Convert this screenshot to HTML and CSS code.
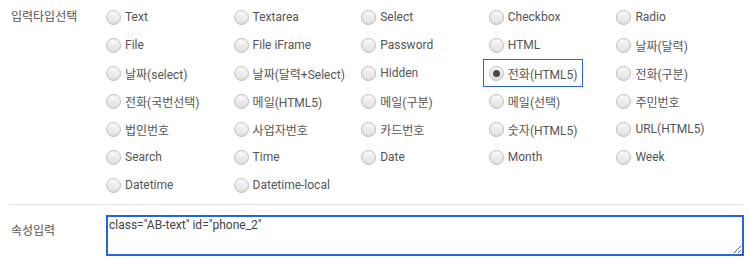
FILE: index.html
```html
<!DOCTYPE html>
<html lang="ko">
<head>
    <meta charset="UTF-8">
    <meta name="viewport" content="width=device-width, initial-scale=1.0">
    <title>입력타입선택</title>
    <link rel="stylesheet" href="styles.css">
</head>
<body>
    <div class="form">
        <div class="form-row">
            <div class="form-label">입력타입선택</div>
            <div class="options">
                <label class="opt"><input type="radio" name="itype"><span>Text</span></label>
                <label class="opt"><input type="radio" name="itype"><span>Textarea</span></label>
                <label class="opt"><input type="radio" name="itype"><span>Select</span></label>
                <label class="opt"><input type="radio" name="itype"><span>Checkbox</span></label>
                <label class="opt"><input type="radio" name="itype"><span>Radio</span></label>

                <label class="opt"><input type="radio" name="itype"><span>File</span></label>
                <label class="opt"><input type="radio" name="itype"><span>File iFrame</span></label>
                <label class="opt"><input type="radio" name="itype"><span>Password</span></label>
                <label class="opt"><input type="radio" name="itype"><span>HTML</span></label>
                <label class="opt"><input type="radio" name="itype"><span>날짜(달력)</span></label>

                <label class="opt"><input type="radio" name="itype"><span>날짜(select)</span></label>
                <label class="opt"><input type="radio" name="itype"><span>날짜(달력+Select)</span></label>
                <label class="opt"><input type="radio" name="itype"><span>Hidden</span></label>
                <label class="opt focused"><input type="radio" name="itype" checked><span>전화(HTML5)</span></label>
                <label class="opt"><input type="radio" name="itype"><span>전화(구분)</span></label>

                <label class="opt"><input type="radio" name="itype"><span>전화(국번선택)</span></label>
                <label class="opt"><input type="radio" name="itype"><span>메일(HTML5)</span></label>
                <label class="opt"><input type="radio" name="itype"><span>메일(구분)</span></label>
                <label class="opt"><input type="radio" name="itype"><span>메일(선택)</span></label>
                <label class="opt"><input type="radio" name="itype"><span>주민번호</span></label>

                <label class="opt"><input type="radio" name="itype"><span>법인번호</span></label>
                <label class="opt"><input type="radio" name="itype"><span>사업자번호</span></label>
                <label class="opt"><input type="radio" name="itype"><span>카드번호</span></label>
                <label class="opt"><input type="radio" name="itype"><span>숫자(HTML5)</span></label>
                <label class="opt"><input type="radio" name="itype"><span>URL(HTML5)</span></label>

                <label class="opt"><input type="radio" name="itype"><span>Search</span></label>
                <label class="opt"><input type="radio" name="itype"><span>Time</span></label>
                <label class="opt"><input type="radio" name="itype"><span>Date</span></label>
                <label class="opt"><input type="radio" name="itype"><span>Month</span></label>
                <label class="opt"><input type="radio" name="itype"><span>Week</span></label>

                <label class="opt"><input type="radio" name="itype"><span>Datetime</span></label>
                <label class="opt"><input type="radio" name="itype"><span>Datetime-local</span></label>
            </div>
        </div>

        <div class="form-row attr-row">
            <div class="form-label">속성입력</div>
            <textarea class="attr-input">class="AB-text" id="phone_2"</textarea>
        </div>
    </div>
</body>
</html>
```

FILE: styles.css
```css
body {
    margin: 0;
    background: #fff;
    font-family: Roboto, "Noto Sans CJK KR", sans-serif;
    font-size: 12px;
    color: #555;
}
.form {
    padding: 3px 6px 0 9px;
}
.form-row {
    display: flex;
}
.form-label {
    width: 95px;
    padding-left: 2px;
    color: #555;
}

/* Radio grid */
.options {
    flex: 1;
    display: grid;
    grid-template-columns: repeat(5, 1fr);
    grid-auto-rows: 28px;
    padding-bottom: 5px;
    border-bottom: 1px solid #e3e3e3;
    margin-left: -97px;
    padding-left: 97px;
}
.form-row:first-child .form-label {
    line-height: 28px;
}
.opt {
    display: flex;
    align-items: center;
    gap: 4px;
    justify-self: start;
    align-self: center;
    height: 16px;
    color: #555;
    cursor: pointer;
}
.opt input {
    appearance: none;
    -webkit-appearance: none;
    width: 15px;
    height: 15px;
    margin: 0;
    border: 1px solid #bcbcbc;
    border-radius: 50%;
    background: linear-gradient(#fafafa, #dedede);
    flex-shrink: 0;
    position: relative;
}
.opt input:checked::after {
    content: "";
    position: absolute;
    left: 3px;
    top: 3px;
    width: 7px;
    height: 7px;
    border-radius: 50%;
    background: #4a4a4a;
}
.opt.focused {
    outline: 1px solid #2b62d9;
    outline-offset: 5px;
}

/* Attribute input */
.attr-row {
    margin-top: 10px;
}
.attr-row .form-label {
    padding-top: 6px;
}
.attr-input {
    flex: 1;
    height: 41px;
    box-sizing: border-box;
    margin: 0;
    padding: 1px 1px;
    border: 2px solid #2563e0;
    border-radius: 0;
    outline: none;
    font-family: Roboto, "Noto Sans CJK KR", sans-serif;
    font-size: 12px;
    color: #444;
    resize: vertical;
}
```
